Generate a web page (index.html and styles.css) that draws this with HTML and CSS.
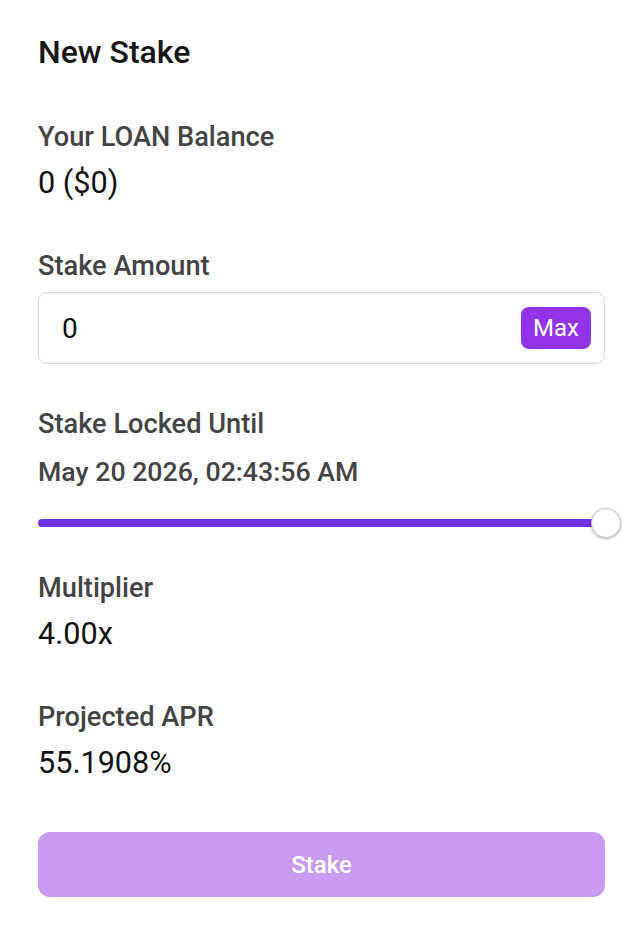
FILE: index.html
```html
<!DOCTYPE html>
<html>
<head>
<meta charset="utf-8">
<link rel="stylesheet" href="styles.css">
</head>
<body>
<div class="card">
  <h1 class="title">New Stake</h1>

  <div class="field first">
    <div class="label">Your LOAN Balance</div>
    <div class="value">0 ($0)</div>
  </div>

  <div class="field">
    <div class="label label-tight">Stake Amount</div>
    <div class="input">
      <span class="input-text">0</span>
      <span class="max">Max</span>
    </div>
  </div>

  <div class="field locked">
    <div class="label">Stake Locked Until</div>
    <div class="label date">May 20 2026, 02:43:56 AM</div>
    <div class="slider">
      <div class="track"></div>
      <div class="thumb"></div>
    </div>
  </div>

  <div class="field mult">
    <div class="label">Multiplier</div>
    <div class="value">4.00x</div>
  </div>

  <div class="field">
    <div class="label">Projected APR</div>
    <div class="value apr">55.1908%</div>
  </div>

  <button class="stake">Stake</button>
</div>
</body>
</html>
```

FILE: styles.css
```css
html, body {
  margin: 0;
  padding: 0;
  background: #ffffff;
}
body {
  font-family: Roboto, "Noto Sans", sans-serif;
  color: #111111;
}
.card {
  padding: 32px 39px 0 38px;
}
.title {
  margin: 0;
  font-size: 32px;
  line-height: 40px;
  font-weight: 500;
  color: #161616;
}
.field {
  margin-top: 49px;
}
.label {
  font-size: 27.2px;
  line-height: 32px;
  font-weight: 500;
  color: #444444;
  margin-bottom: 12px;
}
.label-tight {
  margin-bottom: 10px;
}
.value {
  font-size: 30.6px;
  line-height: 36px;
  font-weight: 400;
  color: #111111;
}
.apr {
  margin-top: 2px;
}
.input {
  box-sizing: border-box;
  height: 72px;
  border: 1px solid #d6d6d6;
  border-radius: 9px;
  display: flex;
  align-items: center;
  justify-content: space-between;
  padding: 0 13px 0 23px;
}
.input-text {
  font-size: 28px;
  color: #111111;
}
.max {
  background: #9333ea;
  color: #ffffff;
  font-size: 24px;
  line-height: 42px;
  height: 42px;
  padding: 0 12px;
  border-radius: 8px;
}
.locked {
  margin-top: 44px;
}
.date {
  font-size: 26.7px;
  margin-top: 16px;
  margin-bottom: 0;
}
.slider {
  position: relative;
  height: 30px;
  margin-top: 20px;
  display: flex;
  align-items: center;
}
.track {
  flex: 1;
  height: 8px;
  border-radius: 4px;
  background: #7230e6;
}
.thumb {
  position: absolute;
  right: -16px;
  top: 0;
  width: 28px;
  height: 28px;
  border-radius: 50%;
  background: #ffffff;
  border: 1px solid #c8c8c8;
  box-shadow: 0 1px 3px rgba(0,0,0,0.3);
}
.mult {
  margin-top: 34px;
}
.stake {
  display: block;
  width: 100%;
  height: 65px;
  margin-top: 51px;
  border: none;
  border-radius: 12px;
  background: #c99af2;
  color: #ffffff;
  font-family: Roboto, "Noto Sans", sans-serif;
  font-size: 24px;
  font-weight: 500;
}
```
